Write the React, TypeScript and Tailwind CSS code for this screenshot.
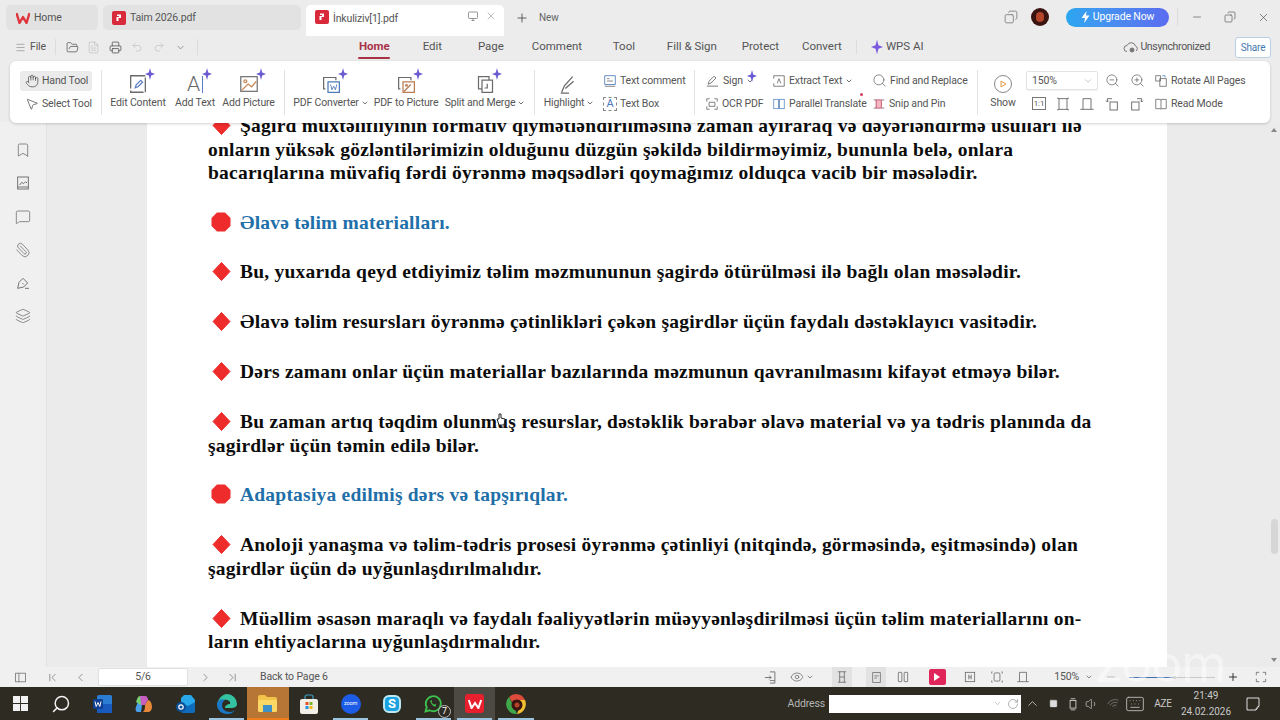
import type { ReactNode } from "react";
import {
  Bookmark,
  ChevronDown,
  ChevronFirst,
  ChevronLast,
  ChevronLeft,
  ChevronRight,
  ChevronUp,
  Copy,
  Eye,
  FileText,
  FolderOpen,
  Hand,
  Keyboard,
  Layers,
  Menu,
  MessageSquare,
  Minus,
  MousePointer2,
  Paperclip,
  Plus,
  Printer,
  Redo2,
  RotateCw,
  Search,
  Square,
  Undo2,
  Volume1,
  Wifi,
  X,
  ZoomIn,
  ZoomOut,
} from "lucide-react";

const g = "#6a6a6a";

function Svg({ size = 16, children, className = "" }: { size?: number; children: ReactNode; className?: string }) {
  return (
    <svg width={size} height={size} viewBox="0 0 24 24" fill="none" stroke={g} strokeWidth={1.4} className={className}>
      {children}
    </svg>
  );
}

function Sparkle({ className = "" }: { className?: string }) {
  return (
    <svg width="10" height="12" viewBox="0 0 10 12" className={`absolute ${className}`}>
      <path d="M5 0 L6.2 4.6 L10 6 L6.2 7.4 L5 12 L3.8 7.4 L0 6 L3.8 4.6 Z" fill="#6a5bd0" />
    </svg>
  );
}

function PdfBadge({ bg = "#d92a3c" }: { bg?: string }) {
  return (
    <svg width="14" height="14" viewBox="0 0 14 14">
      <rect width="14" height="14" rx="2" fill={bg} />
      <path d="M5 3.5h4v3.5H6.5V10H4.5V6h2.5V5H5z" fill="#fff" />
    </svg>
  );
}

function BigTool({ w, label, caret, icon, spark = true }: { w: number; label: string; caret?: boolean; icon: ReactNode; spark?: boolean }) {
  return (
    <div className="flex flex-col items-center shrink-0" style={{ width: w }}>
      <div className="relative h-[22px] w-[24px] flex items-center justify-center">
        {icon}
        {spark && <Sparkle className="-top-[5px] -right-[5px]" />}
      </div>
      <div className="flex items-center gap-[2px] whitespace-nowrap h-[16px] text-[#555]">
        {label}
        {caret && <ChevronDown size={8} strokeWidth={2.5} />}
      </div>
    </div>
  );
}

function SmallTool({ icon, label, caret }: { icon: ReactNode; label: string; caret?: boolean }) {
  return (
    <div className="flex items-center gap-[3px] h-[20px] whitespace-nowrap text-[#555]">
      {icon}
      {label}
      {caret && <ChevronDown size={8} strokeWidth={2.5} />}
    </div>
  );
}

function Sep({ className = "" }: { className?: string }) {
  return <div className={`w-px h-[45px] bg-[#e2e2e2] shrink-0 ${className}`} />;
}

function NavItem({ w, label, active }: { w: number; label: string; active?: boolean }) {
  return (
    <div className="relative shrink-0 h-[24px] flex items-center justify-center" style={{ width: w }}>
      <span className={active ? "font-bold text-[#a83248]" : "text-[#555]"}>{label}</span>
      {active && <div className="absolute bottom-[0px] left-1/2 -translate-x-1/2 w-[32px] h-[2px] bg-[#a83248] rounded" />}
    </div>
  );
}

function Diamond() {
  return (
    <svg width="19" height="19" viewBox="0 0 19 19" className="inline-block align-[-3px] mr-[9px] ml-[4px]">
      <path d="M9.5 0.5 L18 9.5 L9.5 18.5 L1 9.5 Z" fill="#ee2c2c" stroke="#ee2c2c" strokeLinejoin="round" />
    </svg>
  );
}

function Octagon() {
  return (
    <svg width="20" height="20" viewBox="0 0 20 20" className="inline-block align-[-3px] mr-[9px] ml-[3px]">
      <path d="M6 0.5 H14 L19.5 6 V14 L14 19.5 H6 L0.5 14 V6 Z" fill="#ee2c2c" />
    </svg>
  );
}

function Para({ children, head }: { children: ReactNode; head?: boolean }) {
  return <p className={`mb-[26.1px] first:mb-[25.5px] whitespace-nowrap ${head ? "text-[#1f6fa8]" : ""}`}>{children}</p>;
}

function Tile({ children, bar, className = "" }: { children: ReactNode; bar?: boolean; className?: string }) {
  return (
    <div className={`relative w-[41.33px] h-[33px] flex items-center justify-center shrink-0 ${className}`}>
      {children}
      {bar && <div className="absolute bottom-0 left-[3px] right-[3px] h-[2px] bg-[#9cc3e0]" />}
    </div>
  );
}

export default function App() {
  return (
    <div className="w-[1280px] h-[720px] overflow-hidden flex flex-col bg-[#ececec] font-['Roboto',sans-serif] text-[10.5px] tracking-[-0.15px] text-[#555]">
      {/* tab strip */}
      <div className="h-[33px] flex items-start shrink-0 pl-[6px] relative z-10">
        <div className="mt-[5px] w-[92px] h-[25px] rounded-[5px] bg-[#e2e2e2] flex items-center pl-[10px] gap-[4px]">
          <svg width="14" height="12" viewBox="0 0 14 12">
            <path d="M0.5 1 L3.5 11 L7 5 L10.5 11 L13.5 1" fill="none" stroke="#e0343c" strokeWidth="2.4" strokeLinejoin="round" />
          </svg>
          <span>Home</span>
        </div>
        <div className="mt-[5px] ml-[5px] w-[198px] h-[25px] rounded-[5px] bg-[#e2e2e2] flex items-center pl-[9px] gap-[4px]">
          <PdfBadge />
          <span>Taim 2026.pdf</span>
        </div>
        <div className="mt-[5px] ml-[5px] w-[198px] h-[31px] rounded-t-[5px] bg-white flex items-start pt-[5px] pl-[9px] gap-[4px]">
          <PdfBadge />
          <span className="pt-[1px]">İnkuliziv[1].pdf</span>
          <div className="ml-auto mr-[7px] flex items-center gap-[6px] text-[#999]">
            <Svg size={12}>
              <rect x="3" y="4" width="18" height="13" rx="2" />
              <path d="M9 21h6M12 17v4" />
            </Svg>
            <X size={12} strokeWidth={1.3} />
          </div>
        </div>
        <div className="mt-[5px] ml-[11px] h-[25px] flex items-center gap-[10px]">
          <Plus size={14} strokeWidth={1.6} className="text-[#555]" />
          <span className="text-[#666] text-[10px]">New</span>
        </div>
        <div className="ml-auto h-[33px] pt-[1px] flex items-center">
          <Copy size={14} strokeWidth={1.4} className="text-[#777] -scale-x-100" />
          <div className="ml-[13px] w-[18px] h-[18px] rounded-full bg-[#3a1410] flex items-center justify-center">
            <div className="w-[8px] h-[10px] rounded-full bg-[#b5452a]" />
          </div>
          <div className="ml-[17px] w-[103px] h-[19px] rounded-full bg-gradient-to-r from-[#2aa6f0] to-[#5a6cf0] flex items-center justify-center gap-[3px] text-white">
            <svg width="9" height="12" viewBox="0 0 9 12">
              <path d="M5.5 0 L0.5 7 H4 L3.2 12 L8.5 4.6 H5 Z" fill="#fff" />
            </svg>
            Upgrade Now
          </div>
          <div className="ml-[8px] w-px h-[18px] bg-[#dcdcdc]" />
          <Minus size={12} strokeWidth={1.3} className="ml-[13px]" />
          <Copy size={12} strokeWidth={1.3} className="ml-[21px] -scale-x-100" />
          <X size={13} strokeWidth={1.3} className="ml-[21px] mr-[10px]" />
        </div>
      </div>

      {/* menu row */}
      <div className="h-[28px] flex items-center shrink-0 pl-[15px]">
        <Menu size={11} strokeWidth={1.2} className="text-[#777]" />
        <span className="ml-[4px]">File</span>
        <div className="ml-[9px] w-px h-[16px] bg-[#dcdcdc]" />
        <FolderOpen size={13} strokeWidth={1.4} className="ml-[10px] text-[#555]" />
        <FileText size={13} strokeWidth={1.2} className="ml-[8px] text-[#bbb]" />
        <Printer size={13} strokeWidth={1.5} className="ml-[9px] text-[#555]" />
        <Undo2 size={12} strokeWidth={1.2} className="ml-[9px] text-[#bbb]" />
        <Redo2 size={12} strokeWidth={1.2} className="ml-[10px] text-[#bbb]" />
        <ChevronDown size={11} strokeWidth={1.4} className="ml-[10px] text-[#666]" />
        <div className="ml-[11px] w-px h-[16px] bg-[#dcdcdc]" />
        <div className="ml-[148px] flex items-center text-[11.5px] tracking-normal">
          <NavItem w={57} label="Home" active />
          <NavItem w={59} label="Edit" />
          <NavItem w={58} label="Page" />
          <NavItem w={74} label="Comment" />
          <NavItem w={60} label="Tool" />
          <NavItem w={76} label="Fill & Sign" />
          <NavItem w={61} label="Protect" />
          <NavItem w={62} label="Convert" />
        </div>
        <div className="ml-[3px] w-px h-[14px] bg-[#dcdcdc]" />
        <svg width="12" height="16" viewBox="0 0 10 12" className="ml-[14px]">
          <path d="M5 0 L6.2 4.6 L10 6 L6.2 7.4 L5 12 L3.8 7.4 L0 6 L3.8 4.6 Z" fill="#7a5be0" />
        </svg>
        <span className="ml-[3px] text-[11.5px] tracking-normal whitespace-nowrap">WPS AI</span>
        <svg width="16" height="12" viewBox="0 0 16 12" fill="none" stroke="#777" strokeWidth="1" className="ml-auto">
          <path d="M4 10.5 A3 3 0 0 1 4 4.5 A4.5 4.5 0 0 1 12.5 5 A2.8 2.8 0 0 1 13 10" />
          <circle cx="9" cy="9" r="2" fill="#777" />
        </svg>
        <span className="ml-[1px] whitespace-nowrap tracking-[-0.35px]">Unsynchronized</span>
        <div className="ml-[25px] mr-[9px] w-[36px] h-[21px] rounded-[3px] border border-[#b9cfe6] bg-white text-[#3f78b0] flex items-center justify-center text-[10px]">
          Share
        </div>
      </div>

      {/* ribbon */}
      <div className="relative z-10 mx-[10px] h-[62px] shrink-0 bg-white rounded-[6px] shadow-[0_1px_3px_rgba(0,0,0,0.18)] flex items-center pl-[10px] -mb-px">
        <div className="w-[72px] shrink-0 flex flex-col gap-[3px]">
          <div className="h-[20px] rounded-[3px] bg-[#ebebeb] flex items-center pl-[5px] gap-[3px] whitespace-nowrap">
            <Hand size={14} strokeWidth={1.2} className="text-[#444]" />
            Hand Tool
          </div>
          <div className="h-[20px] flex items-center pl-[5px] gap-[3px] whitespace-nowrap">
            <MousePointer2 size={14} strokeWidth={1.2} className="text-[#444]" />
            Select Tool
          </div>
        </div>
        <Sep className="ml-[9px]" />
        <div className="ml-[3px] flex">
          <BigTool
            w={66}
            label="Edit Content"
            icon={
              <Svg size={22}>
                <path d="M4 3h16v18H4z" strokeDasharray="16 2" />
                <path d="M9 16l1-3 5-5 2 2-5 5z" stroke="#5b7fc0" />
              </Svg>
            }
          />
          <BigTool
            w={48}
            label="Add Text"
            icon={
              <div className="flex items-center text-[21px] font-light text-[#666] leading-none">
                A<span className="w-px h-[17px] bg-[#5b7fc0] ml-[2px]" />
              </div>
            }
          />
          <BigTool
            w={59}
            label="Add Picture"
            icon={
              <Svg size={22}>
                <rect x="3" y="4" width="18" height="16" stroke="#777" />
                <circle cx="8" cy="9" r="1.6" stroke="#c98a5a" />
                <path d="M4 19l7-7 4 3 5-6" stroke="#c98a5a" />
              </Svg>
            }
          />
        </div>
        <Sep className="ml-[6px]" />
        <div className="flex ml-[2px]">
          <BigTool
            w={88}
            label="PDF Converter"
            caret
            icon={
              <Svg size={21}>
                <path d="M5 17H3V4h14v3" />
                <rect x="8" y="9" width="13" height="12" stroke="#4a78b8" />
                <path d="M11 12l1.5 6 2-4 2 4 1.5-6" stroke="#4a78b8" strokeWidth={1} />
              </Svg>
            }
          />
          <BigTool
            w={62}
            label="PDF to Picture"
            icon={
              <Svg size={21}>
                <path d="M5 17H3V4h14v3" />
                <rect x="8" y="9" width="13" height="12" stroke="#b97a50" />
                <path d="M9 20l8-8" stroke="#b97a50" />
                <circle cx="12" cy="13" r="1" stroke="#b97a50" />
              </Svg>
            }
          />
          <BigTool
            w={96}
            label="Split and Merge"
            caret
            icon={
              <Svg size={21}>
                <rect x="4" y="3" width="12" height="14" />
                <rect x="8" y="7" width="12" height="14" fill="#fff" />
                <path d="M14 11v5h-3" />
              </Svg>
            }
          />
        </div>
        <Sep className="ml-[1px]" />
        <BigTool
          w={68}
          label="Highlight"
          caret
          spark={false}
          icon={
            <Svg size={22}>
              <path d="M4 21l3-7 9-10M8 17l9-8M3 22h9" />
            </Svg>
          }
        />
        <div className="flex flex-col gap-[3px] w-[91px] shrink-0">
          <SmallTool
            label="Text comment"
            icon={
              <Svg size={14}>
                <rect x="3" y="3" width="18" height="15" stroke="#4a78b8" />
                <path d="M7 8h4M7 12h10M3 21h18" />
              </Svg>
            }
          />
          <SmallTool
            label="Text Box"
            icon={
              <div className="w-[14px] h-[14px] border border-[#888] border-dashed flex items-center justify-center text-[11px] leading-none text-[#4a78b8]">
                A
              </div>
            }
          />
        </div>
        <Sep />
        <div className="flex flex-col gap-[3px] w-[67px] ml-[10px] shrink-0">
          <div className="relative flex items-center">
            <SmallTool
              label="Sign"
              caret
              icon={
                <Svg size={15}>
                  <path d="M5 18l1.5-5 8-8 3 3-8 8zM3 21h18" />
                </Svg>
              }
            />
            <Sparkle className="left-[42px] -top-[1px]" />
          </div>
          <SmallTool
            label="OCR PDF"
            icon={
              <Svg size={14}>
                <path d="M3 8V3h5M16 3h5v5M21 16v5h-5M8 21H3v-5M7 9h10v7H7z" />
              </Svg>
            }
          />
        </div>
        <div className="flex flex-col gap-[3px] w-[100px] shrink-0">
          <SmallTool
            label="Extract Text"
            caret
            icon={
              <Svg size={14}>
                <path d="M3 8V3h18v18H8M3 16v5h5" />
                <path d="M9 16l3-8 3 8" />
              </Svg>
            }
          />
          <div className="relative">
            <SmallTool
              label="Parallel Translate"
              icon={
                <Svg size={14}>
                  <rect x="3" y="4" width="8" height="16" stroke="#5b8ac0" />
                  <rect x="13" y="4" width="8" height="16" stroke="#5b8ac0" />
                </Svg>
              }
            />
            <div className="absolute right-[9px] top-[-1px] w-[3px] h-[3px] rounded-full bg-[#d0405a]" />
          </div>
        </div>
        <div className="flex flex-col gap-[3px] w-[105px] shrink-0">
          <SmallTool label="Find and Replace" icon={<Search size={15} strokeWidth={1.2} className="text-[#666]" />} />
          <SmallTool
            label="Snip and Pin"
            icon={
              <Svg size={14}>
                <rect x="7" y="5" width="9" height="14" fill="#f3b8c4" stroke="#c0405a" />
                <path d="M3 5h4M3 19h4M17 5h4M17 19h4" />
              </Svg>
            }
          />
        </div>
        <Sep />
        <div className="ml-[12px] w-[26px] shrink-0 flex flex-col items-center">
          <div className="w-[18px] h-[18px] rounded-full border border-[#888] flex items-center justify-center mb-[2px] mt-[2px]">
            <svg width="7" height="8" viewBox="0 0 7 8">
              <path d="M1 1 L6 4 L1 7 Z" fill="none" stroke="#e09a40" strokeWidth="1" />
            </svg>
          </div>
          <span className="h-[16px] leading-[16px]">Show</span>
        </div>
        <div className="ml-[10px] flex flex-col gap-[3px] shrink-0">
          <div className="h-[20px] flex items-center">
            <div className="w-[72px] h-[19px] bg-white border border-[#e3e3e3] rounded-[2px] flex items-center justify-between pl-[5px] pr-[4px] shadow-[0_1px_1px_rgba(0,0,0,0.06)]">
              150%
              <ChevronDown size={10} strokeWidth={1.2} className="text-[#888]" />
            </div>
            <ZoomOut size={15} strokeWidth={1.2} className="ml-[7px] text-[#666]" />
            <ZoomIn size={15} strokeWidth={1.2} className="ml-[10px] text-[#666]" />
            <div className="ml-[9px]">
              <SmallTool
                label="Rotate All Pages"
                icon={
                  <Svg size={14}>
                    <rect x="3" y="3" width="8" height="9" />
                    <rect x="10" y="8" width="11" height="13" />
                    <path d="M14 3h5v3" stroke="#5b8ac0" />
                  </Svg>
                }
              />
            </div>
          </div>
          <div className="h-[20px] flex items-center pl-[6px]">
            <div className="w-[14px] h-[13px] border border-[#777] text-[8px] leading-[11px] text-center text-[#555]">1:1</div>
            <Svg size={16} className="ml-[9px]">
              <rect x="6" y="4" width="12" height="16" />
              <path d="M3 3l3 1M21 3l-3 1M3 21l3-1M21 21l-3-1" />
            </Svg>
            <Svg size={16} className="ml-[8px]">
              <path d="M6 20V4h12v16M2 20h20" />
            </Svg>
            <Svg size={16} className="ml-[9px]">
              <rect x="9" y="9" width="11" height="12" />
              <path d="M12 4H5v5M3 7l2 2 2-2" />
            </Svg>
            <Svg size={16} className="ml-[9px]">
              <rect x="4" y="9" width="11" height="12" />
              <path d="M12 4h7v5M17 7l2 2 2-2" />
            </Svg>
            <div className="ml-[9px]">
              <SmallTool
                label="Read Mode"
                icon={
                  <Svg size={14}>
                    <path d="M3 4h8l1 2 1-2h8v16h-8l-1 1-1-1H3zM12 6v15" />
                  </Svg>
                }
              />
            </div>
          </div>
        </div>
      </div>

      {/* document area */}
      <div className="flex-1 min-h-0 flex overflow-hidden">
        <div className="w-[47px] shrink-0 bg-[#f0f0f0] border-r border-[#e3e3e3] flex flex-col items-center pt-[20px] gap-[17.3px] text-[#666]">
          <Bookmark size={16} strokeWidth={1.1} />
          <Svg size={16}>
            <rect x="4" y="3" width="16" height="18" />
            <path d="M7 15l3-4 3 2 3-3 2 2M4 18h16" />
          </Svg>
          <MessageSquare size={16} strokeWidth={1.1} />
          <Paperclip size={16} strokeWidth={1.1} className="-scale-x-100" />
          <Svg size={16}>
            <path d="M4 20l2-9 6-6 7 7-6 6zM11 12l2 2M15 20h6" />
          </Svg>
          <Layers size={16} strokeWidth={1.1} />
        </div>
        <div className="w-[100px] shrink-0 bg-[#ebebeb]" />
        <div className="w-[1020px] shrink-0 bg-white relative overflow-hidden pl-[61px]">
          <div className="-mt-[8px] font-['Liberation_Serif',serif] font-bold text-[19.5px] leading-[23.7px] text-[#0c0c0c] tracking-[0.22px]">
            <Para>
              <Diamond />
              Şagird müxtəlifliyinin formativ qiymətləndirilməsinə zaman ayıraraq və dəyərləndirmə üsulları ilə
              <br />
              onların yüksək gözləntilərimizin olduğunu düzgün şəkildə bildirməyimiz, bununla belə, onlara
              <br />
              bacarıqlarına müvafiq fərdi öyrənmə məqsədləri qoymağımız olduqca vacib bir məsələdir.
            </Para>
            <Para head>
              <Octagon />
              Əlavə təlim materialları.
            </Para>
            <Para>
              <Diamond />
              Bu, yuxarıda qeyd etdiyimiz təlim məzmununun şagirdə ötürülməsi ilə bağlı olan məsələdir.
            </Para>
            <Para>
              <Diamond />
              Əlavə təlim resursları öyrənmə çətinlikləri çəkən şagirdlər üçün faydalı dəstəklayıcı vasitədir.
            </Para>
            <Para>
              <Diamond />
              Dərs zamanı onlar üçün materiallar bazılarında məzmunun qavranılmasını kifayət etməyə bilər.
            </Para>
            <Para>
              <Diamond />
              Bu zaman artıq təqdim olunmuş resurslar, dəstəklik bərabər əlavə material və ya tədris planında da
              <br />
              şagirdlər üçün təmin edilə bilər.
            </Para>
            <Para head>
              <Octagon />
              Adaptasiya edilmiş dərs və tapşırıqlar.
            </Para>
            <Para>
              <Diamond />
              Anoloji yanaşma və təlim-tədris prosesi öyrənmə çətinliyi (nitqində, görməsində, eşitməsində) olan
              <br />
              şagirdlər üçün də uyğunlaşdırılmalıdır.
            </Para>
            <Para>
              <Diamond />
              Müəllim əsasən maraqlı və faydalı fəaliyyətlərin müəyyənləşdirilməsi üçün təlim materiallarını on-
              <br />
              ların ehtiyaclarına uyğunlaşdırmalıdır.
            </Para>
          </div>
          {/* pointer over the page */}
          <svg width="10" height="13" viewBox="0 0 10 13" className="absolute left-[349px] top-[291px]">
            <path d="M3 12 L1 6 L3 6 L3 1 L5 1 L5 5 L9 6 L8 12 Z" fill="#fff" stroke="#222" strokeWidth="1" />
          </svg>
        </div>
        <div className="flex-1 bg-[#ebebeb] flex justify-end pr-[2px]">
          <div className="w-[8px] flex flex-col items-center pt-[6px] pb-[5px]">
            <div className="w-0 h-0 border-x-[3px] border-x-transparent border-b-[4px] border-b-[#888]" />
            <div className="mt-[387px] w-[7px] h-[35px] rounded bg-[#d6d6d6]" />
            <div className="mt-auto w-0 h-0 border-x-[3px] border-x-transparent border-t-[4px] border-t-[#888]" />
          </div>
        </div>
      </div>

      {/* status bar */}
      <div className="relative h-[20px] shrink-0 bg-[#f0f0f0] flex items-center pl-[14px] pr-[12px] text-[#555]">
        <Svg size={13}>
          <rect x="3" y="4" width="18" height="16" />
          <path d="M9 4v16" />
        </Svg>
        <ChevronFirst size={13} strokeWidth={1.1} className="ml-[19px]" />
        <ChevronLeft size={13} strokeWidth={1.1} className="ml-[15px]" />
        <div className="ml-[11px] w-[90px] h-[18px] bg-white rounded-[2px] border border-[#e0e0e0] flex items-center justify-center">5/6</div>
        <ChevronRight size={13} strokeWidth={1.1} className="ml-[11px]" />
        <ChevronLast size={13} strokeWidth={1.1} className="ml-[14px]" />
        <span className="ml-[21px]">Back to Page 6</span>
        <Svg size={15} className="ml-auto">
          <path d="M11 3h8v18h-8M3 12h10M10 9l3 3-3 3M11 17h8" />
        </Svg>
        <Eye size={14} strokeWidth={1.1} className="ml-[12.5px]" />
        <ChevronDown size={8} strokeWidth={2} className="ml-[2px]" />
        <div className="ml-[18px] w-[20px] h-[20px] bg-[#e2e2e2] flex items-center justify-center">
          <Svg size={14}>
            <path d="M5 3h14M5 21h14M8 3v18M16 3v18M8 12h8" />
          </Svg>
        </div>
        <div className="ml-[14px] w-[20px] h-[20px] bg-[#e2e2e2] flex items-center justify-center">
          <Svg size={13}>
            <rect x="5" y="3" width="14" height="18" />
            <path d="M8 9h8M8 13h5" />
          </Svg>
        </div>
        <Svg size={14} className="ml-[10px]">
          <rect x="4" y="4" width="6" height="16" rx="1" />
          <rect x="14" y="4" width="6" height="16" rx="1" />
        </Svg>
        <div className="ml-[18.5px] w-[17px] h-[16px] rounded-[2px] bg-[#e0255a] flex items-center justify-center">
          <svg width="6" height="8" viewBox="0 0 6 8">
            <path d="M0 0 L6 4 L0 8 Z" fill="#fff" />
          </svg>
        </div>
        <Svg size={14} className="ml-[17.5px]">
          <rect x="4" y="4" width="16" height="16" />
          <path d="M10 8v8M14 8v8M10 12h4" />
        </Svg>
        <Svg size={14} className="ml-[13px]">
          <rect x="7" y="5" width="10" height="14" rx="2" />
          <path d="M4 3H3v3M20 3h1v3M4 21H3v-3M20 21h1v-3" />
        </Svg>
        <Svg size={14} className="ml-[12px]">
          <path d="M6 20V4h12v16M2 20h20" />
        </Svg>
        <span className="ml-[24px]">150%</span>
        <ChevronDown size={8} strokeWidth={2} className="ml-[6px]" />
        <Minus size={12} strokeWidth={1.2} className="ml-[12px] text-[#999]" />
        <div className="ml-[12px] w-[86px] h-px bg-[#c8c8c8] relative">
          <div className="absolute left-0 top-0 h-px w-[45px] bg-[#3f6fb0]" />
          <div className="absolute left-[44px] -top-px w-[3px] h-[3px] bg-[#bbb]" />
        </div>
        <Plus size={12} strokeWidth={2} className="ml-[12px] text-[#333]" />
        <Svg size={14} className="ml-[15px]">
          <path d="M4 9V4h5M20 9V4h-5M4 15v5h5M20 15v5h-5" />
        </Svg>
        {/* meeting watermark over the bar */}
        <div className="absolute left-[1094px] -top-[23px] font-['Inter',sans-serif] text-[52px] leading-[40px] font-normal text-white/45 tracking-[-1px] pointer-events-none">
          zoom
        </div>
      </div>

      {/* taskbar */}
      <div className="h-[33px] shrink-0 bg-[#2e2b22] flex items-center pr-[20px] text-[#c9c9c9]">
        <div className="flex -ml-[0.67px]">
          <Tile>
            <svg width="15" height="15" viewBox="0 0 16 16">
              <path d="M0 0h7.5v7.5H0zM8.5 0H16v7.5H8.5zM0 8.5h7.5V16H0zM8.5 8.5H16V16H8.5z" fill="#f2f2f2" />
            </svg>
          </Tile>
          <Tile>
            <Search size={20} strokeWidth={1.8} className="text-[#f2f2f2] -scale-x-100" />
          </Tile>
          <Tile>
            <svg width="19" height="18" viewBox="0 0 19 18">
              <rect x="4" width="15" height="18" rx="1.5" fill="#2b7cd3" />
              <rect x="4" y="9" width="15" height="9" fill="#185abd" />
              <rect y="4" width="10" height="10" rx="1" fill="#103f91" />
              <path d="M2 6.5l1.2 5 1.8-4 1.8 4 1.2-5" fill="none" stroke="#fff" strokeWidth="1" />
            </svg>
          </Tile>
          <Tile>
            <svg width="18" height="18" viewBox="0 0 18 18">
              <path d="M5 1h4l-2 9-1 7H3C1 17 0 15 1 12z" fill="#4aa0e8" />
              <path d="M5 1h5c2 0 3 2 3 4l-3 5H6z" fill="#c85fc0" />
              <path d="M13 5c2 0 4 3 4 7 0 3-2 5-4 5H7c2 0 3-2 3-7z" fill="#e8883c" />
              <path d="M5 1C3 1 2 4 1 7l5 3z" fill="#7ad070" />
            </svg>
          </Tile>
          <Tile>
            <svg width="19" height="18" viewBox="0 0 19 18">
              <path d="M8 0h7l4 5v8H5V3z" fill="#28a8ea" />
              <path d="M5 8l7 3 7-4v9a2 2 0 0 1-2 2H7a2 2 0 0 1-2-2z" fill="#0f6cbd" />
              <circle cx="5" cy="12" r="5" fill="#0a4f96" />
              <circle cx="5" cy="12" r="2.2" fill="none" stroke="#fff" strokeWidth="1.2" />
            </svg>
          </Tile>
          <Tile bar>
            <svg width="20" height="20" viewBox="0 0 20 20">
              <path d="M10 0a10 10 0 0 1 10 10c0 3-3 4-6 4H8c0-3 3-4 5-4 1-3-3-5-6-4-3 0-5 2-7 5C1 5 5 0 10 0z" fill="#34c3a0" />
              <path d="M0 11c0-5 5-7 8-5-2 1-3 3-3 5 0 4 3 7 8 7 2 0 4-1 5-2-2 3-5 4-8 4-5 0-10-4-10-9z" fill="#1a78c8" />
            </svg>
          </Tile>
          <Tile className="bg-[#b87636]">
            <svg width="19" height="17" viewBox="0 0 19 17">
              <path d="M0 2a2 2 0 0 1 2-2h5l2 2h8a2 2 0 0 1 2 2v3H0z" fill="#f2c44a" />
              <rect y="5" width="19" height="12" rx="1.5" fill="#fbd865" />
              <rect x="5" y="10" width="9" height="7" fill="#3d90c8" />
            </svg>
            <div className="absolute bottom-0 inset-x-0 h-[2px] bg-[#f07d1a]" />
          </Tile>
          <Tile>
            <svg width="20" height="20" viewBox="0 0 20 20">
              <path d="M6 5V3a2 2 0 0 1 2-2h4a2 2 0 0 1 2 2v2" fill="none" stroke="#3aa0c8" strokeWidth="1.2" />
              <rect x="1" y="5" width="18" height="15" rx="2" fill="#f2efe8" />
              <rect x="6.5" y="8" width="3" height="3" fill="#e8502a" />
              <rect x="10.5" y="8" width="3" height="3" fill="#7cb82a" />
              <rect x="6.5" y="12" width="3" height="3" fill="#2a90e0" />
              <rect x="10.5" y="12" width="3" height="3" fill="#f2b81a" />
            </svg>
          </Tile>
          <Tile bar>
            <div className="w-[20px] h-[20px] rounded-full bg-[#1c5ce6] text-white text-[5.5px] flex items-center justify-center">zoom</div>
          </Tile>
          <Tile>
            <div className="w-[18px] h-[18px] rounded-[6px] bg-[#1aa3e0] text-white font-bold text-[13px] flex items-center justify-center border-2 border-[#bfe8f5]">
              S
            </div>
          </Tile>
          <Tile bar>
            <svg width="20" height="20" viewBox="0 0 24 24" fill="none" stroke="#3cc24e" strokeWidth="2.2">
              <path d="M3 21l1.5-5A9 9 0 1 1 8 19.5z" />
              <path d="M9 8c-1 2 3 7 6 7l1-2-2-1-1 1-3-3 1-1-1-2z" fill="#3cc24e" stroke="none" />
            </svg>
            <div className="absolute right-[3px] bottom-[2px] w-[13px] h-[13px] rounded-full border border-[#bbb] bg-[#2e2b22] text-white text-[9px] leading-[11px] text-center">7</div>
          </Tile>
          <Tile bar className="bg-[#4c4a42]">
            <div className="w-[19px] h-[19px] rounded-[3px] bg-[#e8202e] flex items-center justify-center">
              <svg width="14" height="10" viewBox="0 0 14 10">
                <path d="M0.8 1 L3.6 9 L7 4 L10.4 9 L13.2 1" fill="none" stroke="#fff" strokeWidth="2" />
              </svg>
            </div>
          </Tile>
          <Tile bar>
            <svg width="20" height="20" viewBox="0 0 20 20">
              <path d="M10 0a10 10 0 0 1 9 6H10a4 4 0 0 0-4 2L3 3a10 10 0 0 1 7-3z" fill="#dd4b3a" />
              <path d="M3 3l4 8 4 8.9A10 10 0 0 1 3 3z" fill="#3ea84a" />
              <path d="M19 6a10 10 0 0 1-8 14l3-8a4 4 0 0 0-1-6z" fill="#f0c030" />
              <circle cx="11" cy="11" r="5.5" fill="#3a1410" />
              <circle cx="11" cy="11" r="2.5" fill="#b5452a" />
            </svg>
          </Tile>
        </div>
        <span className="ml-auto text-[#b5b5b5] whitespace-nowrap">Address</span>
        <div className="ml-[4px] w-[192px] h-[18px] bg-white flex items-center justify-end gap-[5px] pr-[2px] text-[#888]">
          <ChevronDown size={9} strokeWidth={1.3} />
          <RotateCw size={12} strokeWidth={1.3} />
        </div>
        <ChevronUp size={15} strokeWidth={1.2} className="ml-[3.5px] text-[#ddd]" />
        <Square size={9} fill="#ddd" strokeWidth={1} className="ml-[9px] text-[#ddd]" />
        <Svg size={14} className="ml-[8.5px]">
          <rect x="7" y="6" width="10" height="13" stroke="#ddd" />
          <path d="M8 3h8M8 22h8" stroke="#ddd" />
        </Svg>
        <Volume1 size={14} strokeWidth={1.2} className="ml-[5px]" />
        <Wifi size={13} strokeWidth={1.2} className="ml-[7.5px] text-[#888] rotate-[-20deg]" />
        <Keyboard size={20} strokeWidth={1} className="ml-[5.5px]" />
        <span className="ml-[4px] text-[10px] text-[#c9c9c9] w-[28px] text-center">AZE</span>
        <div className="w-[58px] shrink-0 text-center text-[10px] tracking-normal whitespace-nowrap">
          <div className="leading-[16px]">21:49</div>
          <div className="leading-[16px]">24.02.2026</div>
        </div>
        <svg width="14" height="14" viewBox="0 0 14 14" fill="none" stroke="#ddd" className="ml-[11px]">
          <path d="M1 1h12v8l-3 4H1zM10 13c0-2 1-3 3-4" />
        </svg>
      </div>
    </div>
  );
}
